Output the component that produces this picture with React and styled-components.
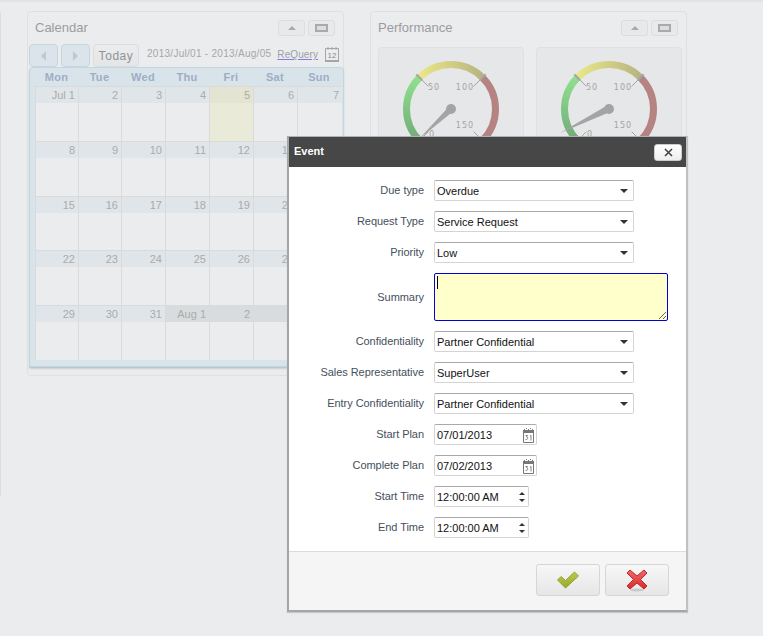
import React from "react";
import styled, { createGlobalStyle } from "styled-components";

const Global = createGlobalStyle`
  html, body { margin: 0; padding: 0; height: 636px; overflow: hidden; background: #ebecee; }
  #root { height: 636px; }
  * { box-sizing: border-box; }
`;

const Page = styled.div`
  position: relative;
  width: 763px;
  height: 636px;
  overflow: hidden;
  background: #ebecee;
  border-top: 2px solid #e2e3e5;
  font-family: "Liberation Sans", Arial, sans-serif;
`;
const LeftRule = styled.div`
  position: absolute;
  left: 0;
  top: 10px;
  width: 1px;
  height: 484px;
  background: #dcdde0;
`;
const Columns = styled.div`
  display: flex;
  align-items: flex-start;
  gap: 26px;
  padding: 9px 0 0 27px;
`;
const Panel = styled.section`
  width: 317px;
  height: ${(p) => p.$h}px;
  padding: 0 1px;
  background: #ebecee;
  border: 1px solid #dfe0e3;
  border-radius: 4px;
  flex: none;
`;
const PanelHead = styled.header`
  display: flex;
  align-items: center;
  justify-content: space-between;
  height: 31px;
  padding: 0 7px 0 6px;
`;
const PanelTitle = styled.h2`
  margin: 0;
  font-size: 13px;
  font-weight: 400;
  color: #9b9c9e;
`;
const PanelTools = styled.div`
  display: flex;
  gap: 3px;
`;
const ToolBtn = styled.button`
  width: 27px;
  height: 16px;
  padding: 0;
  display: flex;
  align-items: center;
  justify-content: center;
  background: #e8e9eb;
  border: 1px solid #dcdde0;
  border-radius: 3px;
`;
const UpTri = styled.span`
  width: 0;
  height: 0;
  border-left: 4px solid transparent;
  border-right: 4px solid transparent;
  border-bottom: 4px solid #a9aaac;
`;
const RectIco = styled.span`
  width: 13px;
  height: 8px;
  border: 2px solid #a9aaac;
  background: #dcdde0;
`;
const CalBar = styled.div`
  display: flex;
  align-items: center;
  height: 23px;
  margin-top: 1px;
`;
const NavBtn = styled.button`
  width: 29px;
  height: 23px;
  margin-right: 3px;
  padding: 0;
  display: flex;
  align-items: center;
  justify-content: center;
  background: #dae4ea;
  border: 1px solid #c6d6df;
  border-radius: 4px;
`;
const NavTri = styled.span`
  width: 0;
  height: 0;
  border-top: 5px solid transparent;
  border-bottom: 5px solid transparent;
  ${(p) => (p.$left ? "border-right: 5px solid #b9cad5;" : "border-left: 5px solid #b9cad5;")}
`;
const TodayBtn = styled.button`
  width: 46px;
  height: 23px;
  padding: 1px 0 0;
  font-family: inherit;
  font-size: 12px;
  letter-spacing: 0.55px;
  color: #919294;
  background: linear-gradient(#ebecee, #e4e5e7);
  border: 1px solid #dcdde0;
  border-radius: 4px;
`;
const Range = styled.span`
  margin-left: 8px;
  font-size: 10px;
  letter-spacing: 0.28px;
  color: #a6a7a9;
  white-space: nowrap;
  position: relative;
  top: -2px;
`;
const ReQuery = styled.a`
  margin-left: 6px;
  font-size: 10px;
  letter-spacing: 0.1px;
  color: #9d9ea8;
  text-decoration: underline;
  text-decoration-color: #7d7dea;
  position: relative;
  top: -1px;
`;
const CalIcon = styled.svg`
  margin: -3px 0 0 6px;
  flex: none;
`;
const CalWidget = styled.div`
  position: relative;
  width: 315px;
  height: 300px;
  background: #d9e4ea;
  border: 1px solid #c3d5e0;
  border-radius: 4px 4px 2px 2px;
  box-shadow: 0 1px 0 #b9c9d3, 0 2px 2px #c9cdd1;
  padding: 0 0 0 5px;
`;
const DayHead = styled.div`
  display: grid;
  grid-template-columns: 43px 43px 44px 44px 44px 44px 44px;
  height: 18px;
`;
const DayName = styled.div`
  font-size: 11px;
  font-weight: 700;
  line-height: 18px;
  text-align: center;
  letter-spacing: 0.3px;
  color: #9eadc6;
`;
const Grid = styled.div`
  display: grid;
  grid-template-columns: 43px 43px 44px 44px 44px 44px 44px;
  background: #ebecee;
  width: 306px;
  border-top: 1px solid #d8dadc;
  border-left: 1px solid #d8dadc;
`;
const Cell = styled.div`
  height: ${(p) => p.$h}px;
  border-right: 1px solid #d8dadc;
  border-bottom: ${(p) => (p.$last ? "0" : "1px solid #d8dadc")};
  background: ${(p) => (p.$today ? "#e9ead8" : "#ebecee")};
  &:nth-child(7n) { border-right: 0; }
`;
const CellNum = styled.div`
  height: 16px;
  padding-right: 3px;
  font-size: 11px;
  line-height: 16px;
  text-align: right;
  color: #ababab;
  background: ${(p) => (p.$today ? "#e3e4d2" : p.$other ? "#d8dcde" : "#e0e5e9")};
`;
const GaugeRow = styled.div`
  display: flex;
  gap: 12px;
  padding: 4px 0 0 6px;
`;
const GaugeCard = styled.div`
  width: 146px;
  height: 160px;
  flex: none;
  background: #e6e7e9;
  border: 1px solid #dfe0e3;
  border-radius: 4px;
`;
const GaugeSvg = styled.svg`
  display: block;
  margin: 1px 0 0 12px;
`;
const Modal = styled.div`
  position: absolute;
  left: 287px;
  top: 134px;
  width: 401px;
  height: 476px;
  display: flex;
  flex-direction: column;
  background: #fff;
  border: 2px solid #a5a6a7;
  border-top: 1px solid #b0b1b2;
  border-right-color: #c0c1c2;
  box-shadow: 0 1px 1px #c8c9ca;
`;
const ModalHead = styled.div`
  display: flex;
  align-items: center;
  justify-content: space-between;
  height: 30px;
  flex: none;
  padding: 0 4px 0 5px;
  background: #474747;
`;
const ModalTitle = styled.span`
  color: #fff;
  font-size: 11px;
  font-weight: 700;
  position: relative;
  top: -1px;
`;
const CloseBtn = styled.button`
  width: 28px;
  height: 17px;
  padding: 0;
  margin-top: 1px;
  display: flex;
  align-items: center;
  justify-content: center;
  background: linear-gradient(#fff, #eee);
  border: 1px solid #ccc;
  border-radius: 3px;
`;
const Form = styled.form`
  display: flex;
  flex-direction: column;
  flex: 1;
  gap: 10px;
  padding: 13px 0 0;
`;
const Row = styled.div`
  display: flex;
  align-items: center;
  height: ${(p) => p.$h || 21}px;
`;
const Label = styled.label`
  width: 135px;
  flex: none;
  margin-top: ${(p) => (p.$area ? 0 : -2)}px;
  text-align: right;
  font-size: 11px;
  letter-spacing: -0.05px;
  color: #45505c;
`;
const Field = styled.div`
  position: relative;
  display: flex;
  align-items: center;
  justify-content: space-between;
  width: ${(p) => p.$w}px;
  height: 21px;
  margin-left: 10px;
  padding: 1px ${(p) => p.$pr}px 0 2px;
  font-size: 11px;
  color: #111;
  background: #fff;
  border: 1px solid #d4d4d4;
  border-top-color: #a9a9a9;
  border-radius: 2px;
`;
const SelectArrow = styled.span`
  width: 0;
  height: 0;
  border-left: 4px solid transparent;
  border-right: 4px solid transparent;
  border-top: 4px solid #333;
`;
const Spin = styled.span`
  display: flex;
  flex-direction: column;
  gap: 4px;
  &::before, &::after {
    content: "";
    width: 0;
    height: 0;
    border-left: 3px solid transparent;
    border-right: 3px solid transparent;
  }
  &::before { border-bottom: 3px solid #333; }
  &::after { border-top: 3px solid #333; }
`;
const AreaWrap = styled.div`
  position: relative;
  margin-left: 10px;
  width: 234px;
  height: 48px;
`;
const Area = styled.textarea`
  display: block;
  width: 234px;
  height: 48px;
  margin: 0;
  padding: 0;
  background: #ffffcc;
  border: 1px solid #0000e0;
  border-radius: 2px;
  outline: none;
`;
const Caret = styled.span`
  position: absolute;
  left: 3px;
  top: 3px;
  width: 1px;
  height: 13px;
  background: #000;
`;
const Footer = styled.div`
  display: flex;
  justify-content: flex-end;
  gap: 5px;
  height: 59px;
  flex: none;
  padding: 12px 17px 0 0;
  background: #f5f5f5;
  border-top: 1px solid #dcdcdc;
`;
const ActionBtn = styled.button`
  width: 64px;
  height: 32px;
  padding: 0;
  display: flex;
  align-items: center;
  justify-content: center;
  background: linear-gradient(#f7f7f7, #e6e6e6);
  border: 1px solid #d6d6d6;
  border-radius: 3px;
`;

const weeks = [
  ["Jul 1", "2", "3", "4", "5", "6", "7"],
  ["8", "9", "10", "11", "12", "13", "14"],
  ["15", "16", "17", "18", "19", "20", "21"],
  ["22", "23", "24", "25", "26", "27", "28"],
  ["29", "30", "31", "Aug 1", "2", "3", "4"],
];
const heights = [55, 55, 54, 55, 54];
const days = ["Mon", "Tue", "Wed", "Thu", "Fri", "Sat", "Sun"];

const pt = (r, deg) => {
  const a = (deg * Math.PI) / 180;
  return [60 + r * Math.sin(a), 60 - r * Math.cos(a)];
};
const arc = (r, a, b) => {
  const [x1, y1] = pt(r, a);
  const [x2, y2] = pt(r, b);
  return `M${x1} ${y1}A${r} ${r} 0 0 1 ${x2} ${y2}`;
};

function Gauge({ id, needle }) {
  const ticks = [-135, -45, 45, 135];
  return (
    <GaugeSvg width="120" height="120" viewBox="0 0 120 120">
      <defs>
        <linearGradient id={`g${id}`} x1="0" y1="0" x2="0" y2="1">
          <stop offset="0" stopColor="#8fe08f" />
          <stop offset="1" stopColor="#72ab78" />
        </linearGradient>
        <linearGradient id={`y${id}`} x1="0" y1="0" x2="1" y2="0">
          <stop offset="0" stopColor="#e9e786" />
          <stop offset="1" stopColor="#b8b482" />
        </linearGradient>
      </defs>
      <path d={arc(44.5, -135, -45)} fill="none" stroke={`url(#g${id})`} strokeWidth="7" />
      <path d={arc(44.5, -45, 45)} fill="none" stroke={`url(#y${id})`} strokeWidth="7" />
      <path d={arc(44.5, 45, 135)} fill="none" stroke="#b58482" strokeWidth="7" />
      {ticks.map((t) => {
        const [x1, y1] = pt(49, t);
        const [x2, y2] = pt(41, t);
        const [x3, y3] = pt(32, t);
        return (
          <g key={t} stroke="#a4a4a4">
            <line x1={x1} y1={y1} x2={x2} y2={y2} strokeWidth="2" />
            <line x1={x2} y1={y2} x2={x3} y2={y3} strokeWidth="1" />
          </g>
        );
      })}
      <g fontFamily="'DejaVu Sans', sans-serif" fontSize="8" letterSpacing="1" fill="#a4a4a4" textAnchor="middle">
        <text x="43" y="41">50</text>
        <text x="74" y="41">100</text>
        <text x="74" y="79">150</text>
        <text x="41" y="88">0</text>
      </g>
      <polygon points={needle} fill="#a4a4a4" />
      <circle cx="60" cy="60" r="5" fill="#a4a4a4" />
    </GaugeSvg>
  );
}

const fields = [
  ["Due type", "Overdue"],
  ["Request Type", "Service Request"],
  ["Priority", "Low"],
];
const fields2 = [
  ["Confidentiality", "Partner Confidential"],
  ["Sales Representative", "SuperUser"],
  ["Entry Confidentiality", "Partner Confidential"],
];

function DateIcon() {
  return (
    <svg width="11" height="15" viewBox="0 0 11 15">
      <path d="M.5 3.500h10v11H.5z" fill="#fff" stroke="#777" />
      <path d="M0 2h11v3H0z" fill="#777" />
      <path d="M1 1h1v1H1zM3 0h1v1H3zM5 1h1v1H5zM7 0h1v1H7zM9 1h1v1H9z" fill="#777" />
      <path d="M2.500 7.500h2l-1 1.500c1 0 1.200.5 1.200 1.200 0 1-.7 1.500-2.200 1.200M7 8l1-.5v5" fill="none" stroke="#666" strokeWidth=".8" />
    </svg>
  );
}

export default function App() {
  return (
    <Page>
      <Global />
      <LeftRule />
      <Columns>
        <Panel $h={365}>
          <PanelHead>
            <PanelTitle>Calendar</PanelTitle>
            <PanelTools>
              <ToolBtn><UpTri /></ToolBtn>
              <ToolBtn><RectIco /></ToolBtn>
            </PanelTools>
          </PanelHead>
          <CalBar>
            <NavBtn><NavTri $left /></NavBtn>
            <NavBtn><NavTri /></NavBtn>
            <TodayBtn>Today</TodayBtn>
            <Range>2013/Jul/01 - 2013/Aug/05</Range>
            <ReQuery>ReQuery</ReQuery>
            <CalIcon width="16" height="17" viewBox="0 0 16 17">
              <path d="M1.500 2.500h13v12h-13z" fill="#ecedee" stroke="#a5a5a5" />
              <path d="M1 14h14v2H1z" fill="#a5a5a5" />
              <path d="M4 1v3M8 1v3M12 1v3" stroke="#a5a5a5" />
              <text x="8" y="11.500" fontSize="8" textAnchor="middle" fontFamily="'Liberation Sans', sans-serif" fill="#8a8a8a">12</text>
            </CalIcon>
          </CalBar>
          <CalWidget>
            <DayHead>
              {days.map((d) => <DayName key={d}>{d}</DayName>)}
            </DayHead>
            <Grid>
              {weeks.map((w, i) =>
                w.map((n, j) => (
                  <Cell key={`${i}-${j}`} $h={heights[i]} $last={i === 4} $today={i === 0 && j === 4}>
                    <CellNum $today={i === 0 && j === 4} $other={i === 4 && j > 2}>{n}</CellNum>
                  </Cell>
                ))
              )}
            </Grid>
          </CalWidget>
        </Panel>
        <Panel $h={365}>
          <PanelHead>
            <PanelTitle>Performance</PanelTitle>
            <PanelTools>
              <ToolBtn><UpTri /></ToolBtn>
              <ToolBtn><RectIco /></ToolBtn>
            </PanelTools>
          </PanelHead>
          <GaugeRow>
            <GaugeCard>
              <Gauge id="a" needle="57.500,58 62,62.500 28,90" />
            </GaugeCard>
            <GaugeCard>
              <Gauge id="b" needle="59,56 61,63 11,84" />
            </GaugeCard>
          </GaugeRow>
        </Panel>
      </Columns>
      <Modal>
        <ModalHead>
          <ModalTitle>Event</ModalTitle>
          <CloseBtn>
            <svg width="9" height="9" viewBox="0 0 9 9">
              <path d="M1 1l7 7M8 1L1 8" stroke="#444" strokeWidth="1.6" />
            </svg>
          </CloseBtn>
        </ModalHead>
        <Form>
          {fields.map(([l, v]) => (
            <Row key={l}>
              <Label>{l}</Label>
              <Field $w={200} $pr={5}>{v}<SelectArrow /></Field>
            </Row>
          ))}
          <Row $h={48}>
            <Label $area>Summary</Label>
            <AreaWrap>
              <Area />
              <Caret />
            </AreaWrap>
          </Row>
          {fields2.map(([l, v]) => (
            <Row key={l}>
              <Label>{l}</Label>
              <Field $w={200} $pr={5}>{v}<SelectArrow /></Field>
            </Row>
          ))}
          <Row>
            <Label>Start Plan</Label>
            <Field $w={103} $pr={2}>07/01/2013<DateIcon /></Field>
          </Row>
          <Row>
            <Label>Complete Plan</Label>
            <Field $w={103} $pr={2}>07/02/2013<DateIcon /></Field>
          </Row>
          <Row>
            <Label>Start Time</Label>
            <Field $w={95} $pr={3}>12:00:00 AM<Spin /></Field>
          </Row>
          <Row>
            <Label>End Time</Label>
            <Field $w={95} $pr={3}>12:00:00 AM<Spin /></Field>
          </Row>
        </Form>
        <Footer>
          <ActionBtn>
            <svg width="24" height="20" viewBox="0 0 24 20">
              <defs>
                <linearGradient id="chk" x1="0" y1="0" x2="0" y2="1">
                  <stop offset="0" stopColor="#bccb4c" />
                  <stop offset="1" stopColor="#97a92e" />
                </linearGradient>
              </defs>
              <path d="M1.500 10L5 6.500l4.500 4L18.500 2 22.500 6 9.500 18z" fill="url(#chk)" stroke="#94a52e" strokeLinejoin="round" />
            </svg>
          </ActionBtn>
          <ActionBtn>
            <svg width="24" height="24" viewBox="0 0 24 24">
              <defs>
                <linearGradient id="crs" x1="0" y1="0" x2="0" y2="1">
                  <stop offset="0" stopColor="#f06a6a" />
                  <stop offset="1" stopColor="#d82a2a" />
                </linearGradient>
              </defs>
              <ellipse cx="12" cy="22" rx="7" ry="1.500" fill="#c9c9c9" />
              <path d="M5 2l7 6 7-6 3 3-6.500 6.500L22 18l-3 3-7-6-7 6-3-3 6.500-6.500L2 5z" fill="url(#crs)" stroke="#c22626" strokeLinejoin="round" />
            </svg>
          </ActionBtn>
        </Footer>
      </Modal>
    </Page>
  );
}
